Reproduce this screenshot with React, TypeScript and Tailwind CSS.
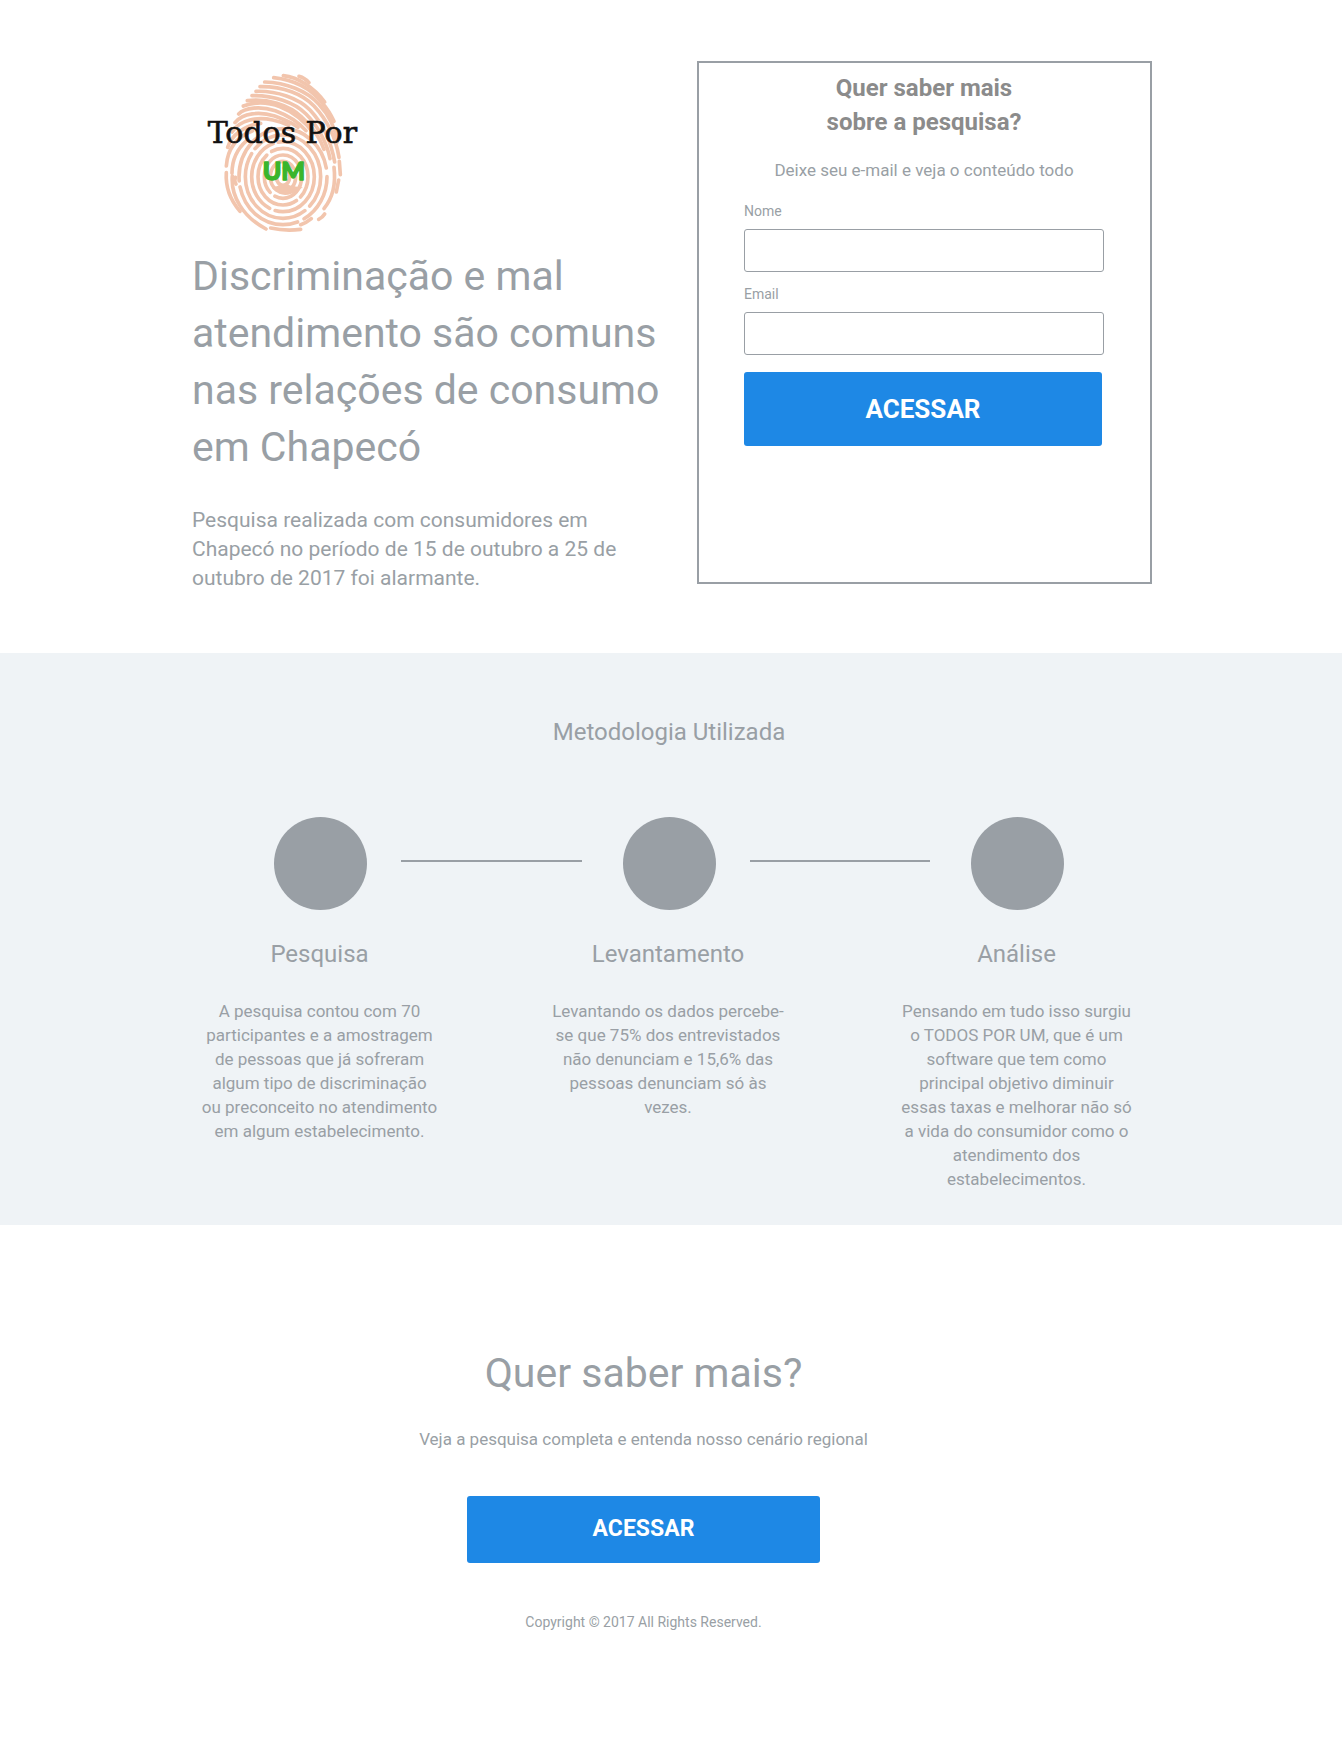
const RIDGES = [
  // crown of the fingertip
  "M329 49 Q347 54 359 68",
  "M282 47 C327 52 374 82 406 126",
  "M253 53 C317 60 364 85 398 128 Q420 153 434 184",
  "M226 66 C290 68 352 92 388 132 C418 164 438 204 444 246",
  "M212 80 C282 79 340 102 374 138 C408 174 438 226 449 292",
  "M200 94 C262 92 328 114 362 150 C394 184 424 238 436 306",
  "M188 107 C252 105 316 128 350 162 C382 194 412 244 422 296",
  "M174 122 C230 114 300 134 338 172 C366 198 392 232 404 268",
  "M162 138 C200 124 240 128 272 140 C314 156 346 184 374 220",
  "M148 162 C166 142 214 138 258 152 C296 166 328 186 350 212",
  "M137 188 C160 158 212 154 256 168 C288 180 312 190 326 202",
  "M128 216 C152 178 206 170 250 180 Q278 186 298 196",
  // left flank
  "M115 262 C127 226 164 196 214 190",
  "M111 318 C114 270 138 232 190 212",
  "M128 340 C128 300 142 268 172 242",
  "M111 338 C108 384 126 424 152 454",
  "M129 348 C124 408 160 470 230 507",
  "M138 352 Q134 364 140 372",
  // right flank and base
  "M450 304 L453 344",
  "M434 322 C440 372 430 414 404 446",
  "M448 360 L441 396",
  "M406 462 Q400 472 388 478",
  "M244 504 Q288 514 334 508",
  "M366 476 Q352 488 334 494",
];

const LOOPS = [
  { rx: 20, ry: 26, dash: "92 18" },
  { rx: 38, ry: 46, dash: "70 16 150 24" },
  { rx: 56, ry: 65, dash: "120 18 200 14" },
  { rx: 75, ry: 85, dash: "66 16 240 18 160" },
  { rx: 94, ry: 105, dash: "180 18 240 16 200" },
  { rx: 113, ry: 125, dash: "96 20 330 18 300" },
  { rx: 132, ry: 144, dash: "150 22 230 18 420" },
];

const STEPS = [
  {
    title: "Pesquisa",
    text: "A pesquisa contou com 70 participantes e a amostragem de pessoas que já sofreram algum tipo de discriminação ou preconceito no atendimento em algum estabelecimento.",
  },
  {
    title: "Levantamento",
    text: "Levantando os dados percebe-se que 75% dos entrevistados não denunciam e 15,6% das pessoas denunciam só às vezes.",
  },
  {
    title: "Análise",
    text: "Pensando em tudo isso surgiu o TODOS POR UM, que é um software que tem como principal objetivo diminuir essas taxas e melhorar não só a vida do consumidor como o atendimento dos estabelecimentos.",
  },
];

function Logo() {
  return (
    <svg viewBox="0 0 570 540" role="img" aria-label="Todos Por UM" className="h-[180px] w-[190px]">
      <g transform="translate(-8 0)" fill="none" stroke="#f2c5ad" strokeWidth="11" strokeLinecap="round">
        {RIDGES.map((d) => (
          <path key={d} d={d} />
        ))}
        {LOOPS.map((l) => (
          <ellipse key={l.rx} cx="281" cy="350" rx={l.rx} ry={l.ry} strokeDasharray={l.dash} />
        ))}
        <path d="M258 386 Q284 412 324 386 Q300 384 288 376 Z" fill="#f2c5ad" />
      </g>
      <text
        x="47"
        y="250"
        fontFamily="'DejaVu Serif', serif"
        fontSize="90"
        fill="#111111"
        stroke="#111111"
        strokeWidth="2"
      >
        Todos Por
      </text>
      <text
        x="212"
        y="360"
        fontFamily="Lato, sans-serif"
        fontWeight="900"
        fontSize="75"
        fill="#3ab52c"
        stroke="#3ab52c"
        strokeWidth="4"
        strokeLinejoin="round"
      >
        UM
      </text>
    </svg>
  );
}

function Field({ id, label, type }: { id: string; label: string; type: string }) {
  return (
    <div>
      <label htmlFor={id} className="mb-2 block text-[14px] leading-5">
        {label}
      </label>
      <input
        id={id}
        type={type}
        className="block h-[43px] w-full rounded-[3px] border border-[#999fa5] bg-white px-3 text-[17px]"
      />
    </div>
  );
}

function Connector() {
  return <div className="mt-[43px] mr-[41px] ml-[34px] h-[2px] flex-1 bg-[#999fa5]" />;
}

function Dot() {
  return <div className="size-[93px] shrink-0 rounded-full bg-[#999fa5]" />;
}

export default function App() {
  return (
    <div className="bg-white font-['Roboto',sans-serif] text-[#999fa5]">
      <header className="mx-auto flex max-w-[960px] items-start justify-between pt-[60px] pb-[60px]">
        <div className="w-[480px]">
          <Logo />
          <h1 className="mt-2 text-[41px] leading-[57px]">
            Discriminação e mal atendimento são comuns nas relações de consumo em Chapecó
          </h1>
          <p className="mt-[30px] max-w-[440px] text-[21px] leading-[29px]">
            Pesquisa realizada com consumidores em Chapecó no período de 15 de outubro a 25 de outubro de 2017 foi
            alarmante.
          </p>
        </div>
        <form
          className="mt-px min-h-[523px] w-[455px] border-2 border-[#999fa5] pt-2 pr-[46px] pl-[45px]"
          onSubmit={(e) => e.preventDefault()}
        >
          <h2 className="text-center text-[24px] leading-[34px] font-bold text-[#8b8b8b]">
            Quer saber mais
            <br />
            sobre a pesquisa?
          </h2>
          <p className="mt-[19px] mb-[19px] text-center text-[17px] leading-6">
            Deixe seu e-mail e veja o conteúdo todo
          </p>
          <div className="flex flex-col gap-3">
            <Field id="nome" label="Nome" type="text" />
            <Field id="email" label="Email" type="email" />
          </div>
          <button
            type="submit"
            className="mt-[17px] h-[74px] w-[358px] rounded-[3px] bg-[#1e88e5] text-[26px] font-bold text-white"
          >
            ACESSAR
          </button>
        </form>
      </header>

      <section className="mr-[2px] bg-[#eff3f6] pt-[62px] pb-[34px]">
        <div className="mx-auto max-w-[960px] pr-[14px] pl-[10px]">
          <h2 className="text-center text-[24px] leading-[34px]">Metodologia Utilizada</h2>
          <div className="mt-[68px] flex items-start px-[73px]">
            <Dot />
            <Connector />
            <Dot />
            <Connector />
            <Dot />
          </div>
          <div className="mt-[27px] flex justify-between pr-[2px] text-center">
            {STEPS.map((step) => (
              <article key={step.title} className="w-[237px]">
                <h3 className="text-[24px] leading-[34px]">{step.title}</h3>
                <p className="mt-7 text-[17px] leading-6">{step.text}</p>
              </article>
            ))}
          </div>
        </div>
      </section>

      <footer className="mx-auto max-w-[960px] pt-[120px] pr-[57px] pb-[108px] text-center">
        <h2 className="text-[41px] leading-[57px]">Quer saber mais?</h2>
        <p className="mt-[25px] text-[17px] leading-6">Veja a pesquisa completa e entenda nosso cenário regional</p>
        <button
          type="button"
          className="mx-auto mt-[45px] block h-[67px] w-[353px] rounded-[3px] bg-[#1e88e5] text-[23px] font-bold text-white"
        >
          ACESSAR
        </button>
        <p className="mt-[49px] text-[14px] leading-5">Copyright © 2017 All Rights Reserved.</p>
      </footer>
    </div>
  );
}
